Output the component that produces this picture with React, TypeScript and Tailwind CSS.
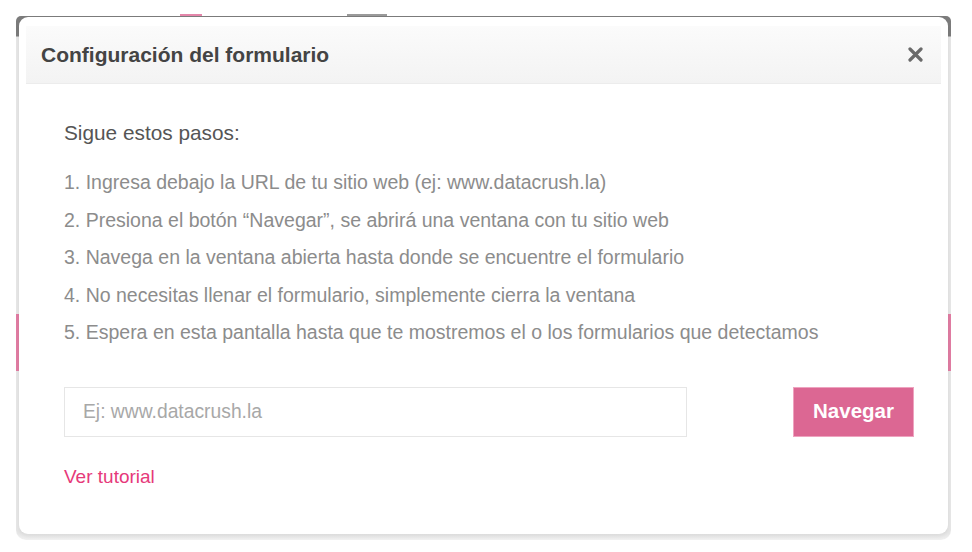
const steps = [
  '1. Ingresa debajo la URL de tu sitio web (ej: www.datacrush.la)',
  '2. Presiona el botón “Navegar”, se abrirá una ventana con tu sitio web',
  '3. Navega en la ventana abierta hasta donde se encuentre el formulario',
  '4. No necesitas llenar el formulario, simplemente cierra la ventana',
  '5. Espera en esta pantalla hasta que te mostremos el o los formularios que detectamos',
];

export default function App() {
  return (
    <div className="relative w-[972px] h-[552px] overflow-hidden bg-white pt-4 pl-4 font-['Liberation_Sans',Arial,sans-serif]">
      {/* bits of the page behind the modal */}
      <div className="absolute left-[180px] top-[14px] w-[22px] h-[2px] bg-[#e486aa]" />
      <div className="absolute left-[347px] top-[14px] w-[40px] h-[2px] bg-[#9a9a9a]" />

      {/* Frame */}
      <div className="relative w-[935px] h-[524px] rounded-t-[5px] rounded-b-[10px] bg-[linear-gradient(to_bottom,#7b7b7b_0px,#7b7b7b_20px,#e6e6e6_21px,#e6e6e6_516px,#f2f2f2_524px)] px-[3px] pt-[1px]">
        <div className="absolute left-0 top-[298px] w-[3px] h-[57px] bg-[#e07ca2]" />
        <div className="absolute right-0 top-[298px] w-[3px] h-[57px] bg-[#e07ca2]" />

        {/* Card */}
        <div className="relative h-[517px] rounded-[9px] bg-white pt-[9px] px-[7px] shadow-[0_3px_4px_rgba(0,0,0,0.06)]">
          {/* Header */}
          <div className="flex h-[58px] items-center justify-between border-b border-[#ececec] bg-[linear-gradient(to_bottom,#fbfbfb,#f3f3f3)] pl-[15px] pr-[18px]">
            <h2 className="text-[21px] font-bold text-[#444] leading-none">Configuración del formulario</h2>
            <button className="text-[#6a6a6a]" aria-label="Cerrar">
              <svg width="15" height="15" viewBox="0 0 15 15">
                <path d="M2 2 L13 13 M13 2 L2 13" stroke="currentColor" strokeWidth="3.2" strokeLinecap="round" />
              </svg>
            </button>
          </div>

          {/* Body */}
          <div className="pl-[38px] pr-[27px] pt-[37px]">
            <p className="text-[20.8px] leading-[24px] text-[#555]">Sigue estos pasos:</p>
            <ul className="mt-[19px] text-[19.5px] leading-[37.5px] text-[#8c8c8c]">
              {steps.map((s) => (
                <li key={s} className="whitespace-nowrap">{s}</li>
              ))}
            </ul>

            <div className="mt-[35px] flex items-center justify-between">
              <input
                type="text"
                placeholder="Ej: www.datacrush.la"
                className="h-[50px] w-[623px] border border-[#e6e6e6] bg-white px-[18px] text-[19.3px] text-[#555] outline-none placeholder:text-[#a8a8a8]"
              />
              <button className="h-[50px] w-[121px] border border-[#eea3bf] bg-[#dc6793] text-[20.5px] font-bold text-white">
                Navegar
              </button>
            </div>

            <a href="#" className="mt-[28px] block text-[19px] leading-[24px] text-[#e6397a]">
              Ver tutorial
            </a>
          </div>
        </div>
      </div>
    </div>
  );
}
